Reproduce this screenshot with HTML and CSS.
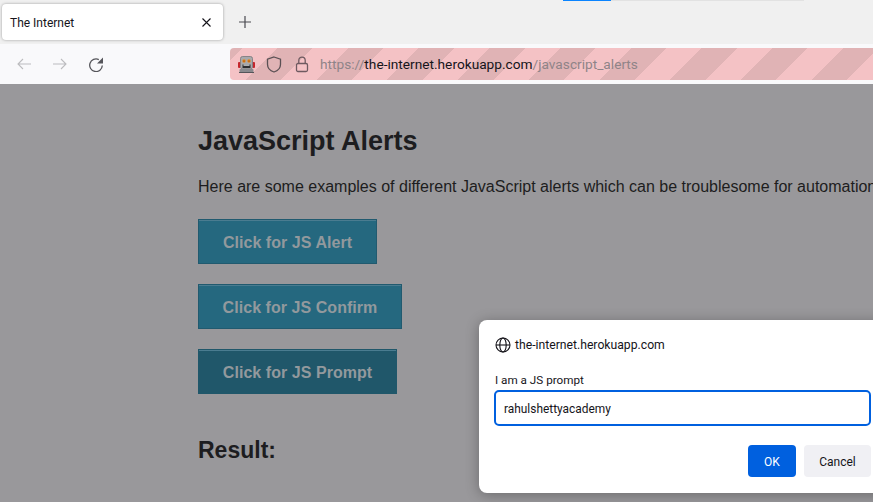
FILE: index.html
```html
<!DOCTYPE html>
<html lang="en">
<head>
<meta charset="utf-8">
<title>The Internet</title>
<link rel="stylesheet" href="styles.css">
</head>
<body>
<div class="browser">
  <header class="tabbar">
    <div class="progress"><span class="progress-blue"></span><span class="progress-gray"></span></div>
    <div class="tabrow">
      <div class="tab">
        <span class="tab-title">The Internet</span>
        <svg class="tab-close" width="9" height="9" viewBox="0 0 9 9"><path d="M.5.5l8 8M8.500.5l-8 8" stroke="#15141a" stroke-width="1.100" fill="none"/></svg>
      </div>
      <svg class="newtab" width="12" height="12" viewBox="0 0 12 12"><path d="M6 0v12M0 6h12" stroke="#4a4a50" stroke-width="1.200" fill="none"/></svg>
    </div>
  </header>
  <nav class="navbar">
    <div class="navbtns">
      <svg width="14" height="12" viewBox="0 0 14 12"><path d="M14 6H1M6 1L1 6l5 5" stroke="#bcbcbf" stroke-width="1.100" fill="none"/></svg>
      <svg width="14" height="12" viewBox="0 0 14 12"><path d="M0 6h13M8 1l5 5-5 5" stroke="#bcbcbf" stroke-width="1.100" fill="none"/></svg>
      <svg width="14" height="15" viewBox="0 0 14 15"><path d="M13.300 8.500A6.300 6.300 0 1 1 9.800 2.600" stroke="#55555a" stroke-width="1.300" fill="none"/><path d="M14 .5v6H8z" fill="#55555a"/></svg>
    </div>
    <div class="urlbar">
      <svg class="robot" width="17" height="17" viewBox="0 0 17 17">
        <rect x="0" y="6" width="2.500" height="6" rx="1" fill="#c5262c"/><rect x="14.500" y="6" width="2.500" height="6" rx="1" fill="#c5262c"/>
        <rect x="2.500" y="0.500" width="12" height="12.500" rx="2" fill="#a9a9ab" stroke="#77777a" stroke-width=".8"/>
        <circle cx="6" cy="5" r="1.700" fill="#e8861a"/><circle cx="11" cy="5" r="1.700" fill="#e8861a"/>
        <circle cx="6" cy="5" r=".6" fill="#6a2a10"/><circle cx="11" cy="5" r=".6" fill="#6a2a10"/>
        <rect x="4.500" y="8.500" width="8" height="3.500" fill="#2e2e31"/><rect x="5.500" y="8.500" width="6" height="1.200" fill="#e6e6e6"/>
        <rect x="1.500" y="13" width="14" height="3.500" rx="1" fill="#8a8a8e"/><rect x="1" y="16" width="15" height="1" fill="#55555a"/>
      </svg>
      <svg class="shield" width="16" height="17" viewBox="0 0 16 17"><path d="M8 1l6.500 2.200v5C14.500 12.500 11 15 8 16 5 15 1.500 12.500 1.500 8.200v-5z" stroke="#5a5054" stroke-width="1.300" fill="none"/></svg>
      <svg class="lock" width="14" height="17" viewBox="0 0 14 17"><rect x="1.500" y="7.500" width="11" height="8" rx="1.500" stroke="#6e5a60" stroke-width="1.300" fill="none"/><path d="M3.800 7.500V4.300a3.200 3.200 0 0 1 6.400 0v3.200" stroke="#6e5a60" stroke-width="1.300" fill="none"/></svg>
      <span class="url"><span class="url-dim">https://</span><span class="url-host">the-internet.herokuapp.com</span><span class="url-dim">/javascript_alerts</span></span>
    </div>
  </nav>
  <main class="page">
    <h3 class="title">JavaScript Alerts</h3>
    <p class="lead">Here are some examples of different JavaScript alerts which can be troublesome for automation.</p>
    <ul class="actions">
      <li><button class="btn btn-alert" type="button">Click for JS Alert</button></li>
      <li><button class="btn btn-confirm" type="button">Click for JS Confirm</button></li>
      <li><button class="btn btn-prompt" type="button">Click for JS Prompt</button></li>
    </ul>
    <h4 class="result">Result:</h4>
  </main>
</div>
<section class="dialog">
  <div class="origin">
    <svg width="16" height="16" viewBox="0 0 16 16"><g stroke="#15141a" stroke-width="1.100" fill="none"><circle cx="8" cy="8" r="7"/><ellipse cx="8" cy="8" rx="3.200" ry="7"/><path d="M1 8h14"/></g></svg>
    <span>the-internet.herokuapp.com</span>
  </div>
  <label class="prompt-label" for="answer">I am a JS prompt</label>
  <input class="prompt-input" id="answer" type="text" value="rahulshettyacademy">
  <div class="dialog-actions">
    <button class="dbtn dbtn-ok" type="button">OK</button>
    <button class="dbtn" type="button">Cancel</button>
  </div>
</section>
</body>
</html>
```

FILE: styles.css
```css
* { box-sizing: border-box; }
html, body { margin: 0; height: 100%; overflow: hidden; }
body { position: relative; font-family: Roboto, "Noto Sans", sans-serif; color: #15141a; }
.browser { display: flex; flex-direction: column; height: 502px; }

.tabbar { height: 44px; background: #f0f0f0; display: flex; flex-direction: column; }
.progress { display: flex; height: 1px; padding-left: 563px; }
.progress-blue { width: 48px; background: #0a84ff; }
.progress-gray { width: 193px; background: #e2e2e2; }
.tabrow { display: flex; align-items: center; padding: 3px 0 0 2px; }
.tab { width: 221px; height: 36px; background: #fff; border-radius: 4px; box-shadow: 0 0 3px rgba(0,0,0,.35); display: flex; align-items: center; justify-content: space-between; padding: 0 12px 0 8px; }
.tab-title { font-size: 12px; padding-top: 1px; color: #15141a; }
.newtab { margin-left: 16px; }

.navbar { height: 40px; background: #f9f9fb; display: flex; align-items: center; padding: 0 0 0 17px; }
.navbtns { display: flex; align-items: center; gap: 22px; width: 213px; }
.urlbar { flex: 1; height: 32px; border-radius: 4px 0 0 4px; display: flex; align-items: center; padding-left: 8px; background: repeating-linear-gradient(-45deg, #f4c2c5 0 18.7px, #e0b3b5 18.7px 43.7px, #f4c2c5 43.7px 50px); }
.shield { margin-left: 11px; }
.lock { margin-left: 13px; }
.url { margin-left: 11px; font-size: 13.700px; color: #15141a; white-space: nowrap; }
.url-dim { color: #8f8488; }

.page { flex: 1; background: #99989b; padding: 0 0 0 198px; overflow: hidden; color: #1d1d20; font-family: "Liberation Sans", Arial, sans-serif; white-space: nowrap; }
.title { margin: 41px 0 0; font-size: 27px; line-height: 32px; font-weight: 700; }
.lead { margin: 18px 0 0; font-size: 16px; line-height: 24px; }
.actions { list-style: none; margin: 20px 0 0; padding: 0; display: flex; flex-direction: column; gap: 20px; }
.actions li { display: flex; }
.btn { height: 45px; padding: 2px 0 0; background: #25687f; border: 1px solid #215a6f; box-shadow: inset 0 1px 0 #4a7c90; color: #92999d; font: 700 16px "Liberation Sans", Arial, sans-serif; letter-spacing: .05px; }
.btn-alert { width: 179px; }
.btn-confirm { width: 204px; }
.btn-prompt { width: 199px; background: #20576a; border-color: #20576a; }
.result { margin: 42px 0 0; font-size: 23px; line-height: 28px; font-weight: 700; }

.dialog { position: absolute; left: 479px; top: 320px; width: 420px; height: 173px; background: #fff; border-radius: 8px; box-shadow: 0 2px 14px rgba(0,0,0,.3); padding: 16px 27px 16px 16px; }
.origin { display: flex; align-items: center; gap: 4px; font-size: 12.200px; line-height: 18px; }
.prompt-label { display: block; margin-top: 18px; font-size: 11.700px; line-height: 16px; }
.prompt-input { display: block; width: 377px; height: 36px; margin: 2px 0 0 -1px; padding: 1px 8px 0; border: 2px solid #0060df; border-radius: 5px; font: 11.900px Roboto, sans-serif; color: #15141a; outline: none; }
.dialog-actions { display: flex; justify-content: flex-end; gap: 8px; margin-top: 19px; margin-right: 1px; }
.dbtn { height: 32px; width: 67px; border: 0; border-radius: 4px; background: #f0f0f4; color: #15141a; font: 12px Roboto, sans-serif; padding: 1px 0 0; }
.dbtn-ok { width: 48px; background: #0060df; color: #fff; }
```
